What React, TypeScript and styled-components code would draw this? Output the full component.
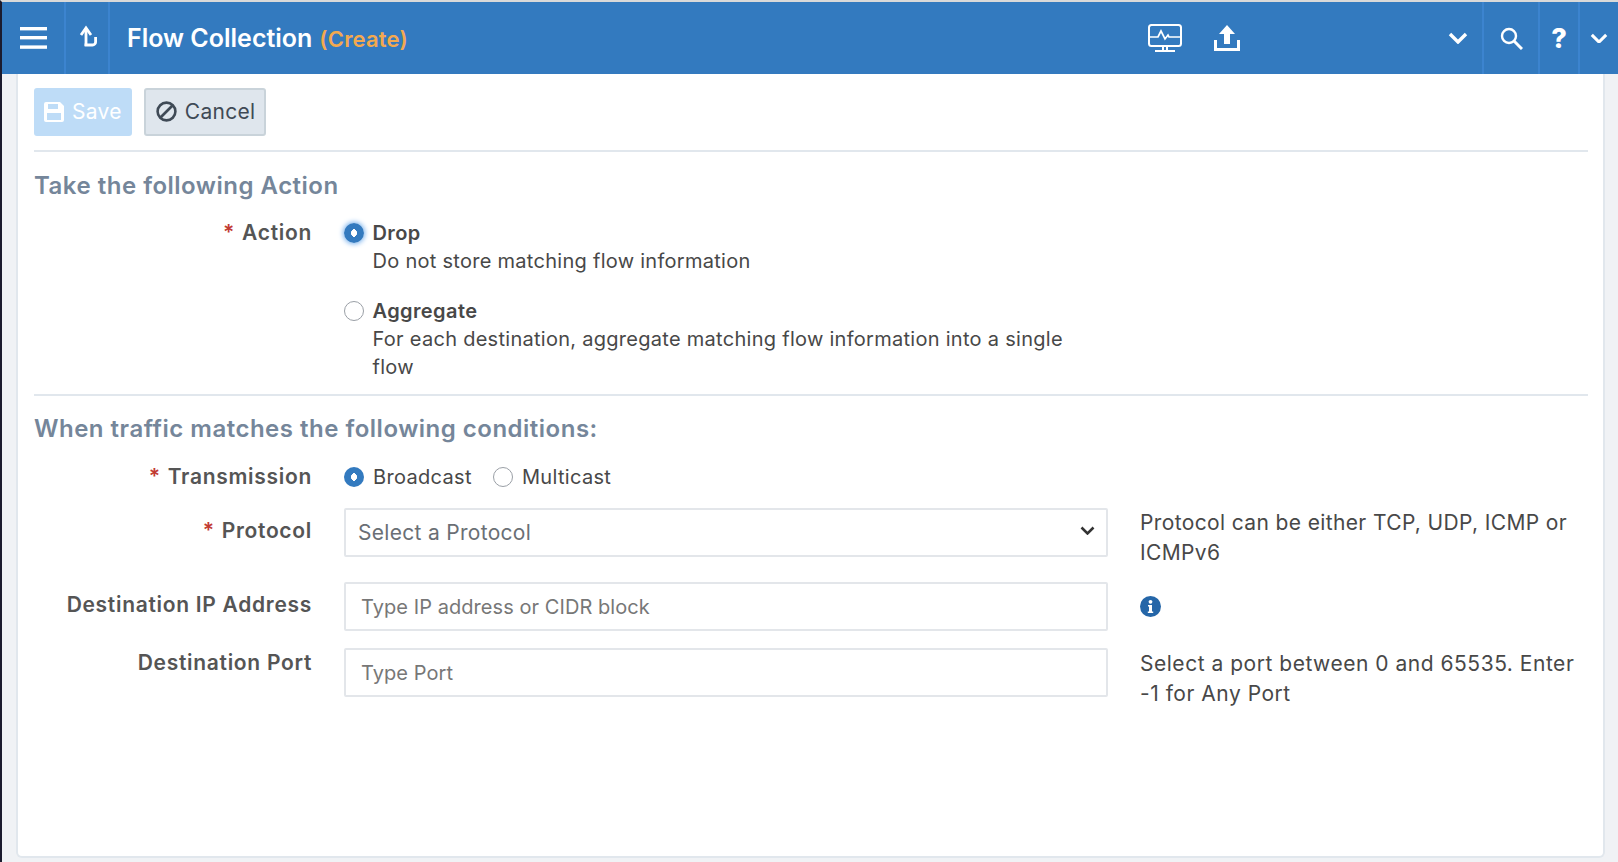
import React from "react";
import styled, { createGlobalStyle } from "styled-components";

const GlobalStyle = createGlobalStyle`
  html, body {
    margin: 0;
    height: 100%;
    background: #f0f2f5;
    overflow: hidden;
  }
  #root {
    height: 100%;
  }
`;

const Page = styled.div`
  display: flex;
  flex-direction: column;
  height: 862px;
  border-left: 2px solid #1b1b2e;
  border-top: 2px solid #d9d9d9;
  box-sizing: border-box;
  font-family: Inter, "Liberation Sans", sans-serif;
  font-size: 20px;
  color: #484848;
`;

const Header = styled.header`
  display: flex;
  align-items: stretch;
  flex: 0 0 72px;
  background: #337abf;
  color: #fff;
`;

const HeaderCell = styled.div<{ $w: number; $divider?: boolean; $nudge?: number }>`
  display: flex;
  align-items: center;
  justify-content: center;
  box-sizing: border-box;
  width: ${props => props.$w}px;
  padding-left: ${props => props.$nudge ?? 0}px;
  border-right: ${props => (props.$divider ? "2px solid #3c84cf" : "none")};
`;

const Title = styled.h1`
  display: flex;
  align-items: baseline;
  margin: 0 0 0 17px;
  align-self: center;
  font-size: 25px;
  font-weight: 600;
`;

const Mode = styled.span`
  margin-left: 7px;
  font-size: 22px;
  font-weight: 600;
  letter-spacing: 0.2px;
  color: #f3a94f;
`;

const HeaderTools = styled.div`
  display: flex;
  align-items: center;
  gap: 32px;
  margin-left: auto;
  margin-right: 190px;
`;

const Help = styled.span`
  font-size: 27px;
  font-weight: 800;
  line-height: 1;
`;

const Main = styled.main`
  flex: 1;
  display: flex;
  padding: 0 13px 4px 14px;
  min-height: 0;
`;

const Card = styled.section`
  flex: 1;
  box-sizing: border-box;
  padding: 14px 15px 0 16px;
  background: #fff;
  border: 2px solid #e1e7ed;
  border-top: none;
  border-radius: 0 0 6px 6px;
`;

const Toolbar = styled.div`
  display: flex;
  gap: 12px;
  padding-bottom: 14px;
  border-bottom: 2px solid #e1e7ed;
`;

const Button = styled.button<{ $disabled?: boolean }>`
  display: flex;
  align-items: center;
  gap: 8px;
  height: 48px;
  padding: 0 ${props => (props.$disabled ? 8 : 9)}px 1px ${props => (props.$disabled ? 8 : 10)}px;
  font: inherit;
  font-size: 21px;
  letter-spacing: 0.3px;
  border-radius: 3px;
  border: 2px solid ${props => (props.$disabled ? "#bedcf7" : "#c9d3da")};
  background: ${props => (props.$disabled ? "#bedcf7" : "#dfe6ed")};
  color: ${props => (props.$disabled ? "#fff" : "#3f4a56")};
`;

const SectionTitle = styled.h2`
  margin: 0;
  font-size: 24px;
  line-height: 28px;
  font-weight: 600;
  letter-spacing: 0.5px;
  color: #75869a;
`;

const ActionSection = styled.div`
  padding: 20px 0 13px;
  border-bottom: 2px solid #e1e7ed;
`;

const ConditionSection = styled.div`
  padding-top: 19px;
`;

const FormRow = styled.div<{ $top: number }>`
  display: grid;
  grid-template-columns: 278px 764px 1fr;
  column-gap: 32px;
  margin-top: ${props => props.$top}px;
  min-height: 28px;
`;

const FieldLabel = styled.label<{ $offset?: number }>`
  padding-top: ${props => props.$offset ?? 0}px;
  text-align: right;
  font-size: 21px;
  font-weight: 600;
  line-height: 28px;
  color: #555;
  letter-spacing: 0.7px;
`;

const Required = styled.span`
  margin-right: 7px;
  color: #c23a33;
`;

const RadioStack = styled.div`
  display: flex;
  flex-direction: column;
  gap: 22px;
  width: 720px;
`;

const RadioRow = styled.label`
  display: grid;
  grid-template-columns: 20px 1fr;
  column-gap: 8.5px;
  line-height: 28px;
`;

const RadioInput = styled.input<{ $focus?: boolean }>`
  appearance: none;
  align-self: center;
  box-sizing: border-box;
  width: 20px;
  height: 20px;
  margin: 0;
  border-radius: 50%;
  border: 1.5px solid #9a9fa6;
  background: #fff;

  &:checked {
    border: none;
    background: radial-gradient(ellipse 3px 4px at center, #fff 90%, #337abf 100%);
    box-shadow: ${props => (props.$focus ? "0 0 5px 1px #79b2ee" : "none")};
  }
`;

const RadioName = styled.span`
  font-weight: 600;
  letter-spacing: 0.4px;
`;

const RadioHint = styled.span`
  grid-column: 2;
  letter-spacing: 0.28px;
`;

const InlineRadios = styled.div`
  display: flex;
  gap: 21px;
`;

const InlineRadio = styled.label`
  display: flex;
  align-items: center;
  gap: 9px;
  line-height: 28px;
  letter-spacing: 0.33px;
`;

const SelectWrap = styled.div`
  position: relative;
`;

const Select = styled.select`
  appearance: none;
  width: 100%;
  box-sizing: border-box;
  height: 49px;
  padding: 0 12px;
  font: inherit;
  font-size: 21px;
  letter-spacing: 0.3px;
  color: #6a6f75;
  background: #fff;
  border: 2px solid #e3e6ea;
  border-radius: 2px;
`;

const SelectArrow = styled.span`
  position: absolute;
  display: flex;
  right: 13px;
  top: 18px;
  pointer-events: none;
`;

const TextInput = styled.input`
  width: 100%;
  box-sizing: border-box;
  height: 49px;
  padding: 0 15px;
  font: inherit;
  letter-spacing: 0.06px;
  background: #fff;
  border: 2px solid #e3e6ea;
  border-radius: 2px;

  &::placeholder {
    color: #777;
    opacity: 1;
  }
`;

const HelpText = styled.p<{ $top?: number; $spacing?: number }>`
  margin: 0;
  padding-top: ${props => props.$top ?? 0}px;
  font-size: 21px;
  line-height: 30px;
  letter-spacing: ${props => props.$spacing ?? 0.37}px;
`;

const InfoWrap = styled.div`
  display: flex;
  align-items: center;
`;

function TreeUp() {
  return (
    <svg width="20" height="26" viewBox="0 0 20 26" fill="none" stroke="#fff" strokeWidth="2.8">
      <path d="M9 21V3.5" />
      <path d="M4 10 9 3l5 7" />
      <path d="M7.6 20h8a3 3 0 0 0 3-3v-5" />
    </svg>
  );
}

function Hamburger() {
  return (
    <svg width="27" height="22" viewBox="0 0 27 22" fill="#fff">
      <rect y="0" width="27" height="3.4" />
      <rect y="9" width="27" height="3.4" />
      <rect y="18.4" width="27" height="3.4" />
    </svg>
  );
}

function Monitor() {
  return (
    <svg width="34" height="28" viewBox="0 0 34 28" fill="none" stroke="#fff" strokeWidth="2">
      <rect x="1" y="1" width="32" height="21" rx="2.5" />
      <path d="M1 13h9l3-6 4 8 3-4 1 2h12" strokeWidth="1.7" />
      <path d="M7 27h20M15 23v3M19 23v3" />
    </svg>
  );
}

function Upload() {
  return (
    <svg width="26" height="26" viewBox="0 0 26 26" fill="#fff">
      <path d="M13 0 21 9h-5v10h-6V9H5z" />
      <path d="M0 15h3v8h20v-8h3v11H0z" />
    </svg>
  );
}

function Chevron({ size, color = "#fff" }: { size: number; color?: string }) {
  return (
    <svg width={size} height={size * 0.6} viewBox="0 0 20 12" fill="none" stroke={color} strokeWidth="3.4">
      <path d="M2 2l8 8 8-8" />
    </svg>
  );
}

function Search() {
  return (
    <svg width="23" height="23" viewBox="0 0 23 23" fill="none" stroke="#fff">
      <circle cx="9" cy="9" r="7" strokeWidth="2.4" />
      <path d="M14 14l8 8" strokeWidth="3" />
    </svg>
  );
}

function Floppy({ color }: { color: string }) {
  return (
    <svg width="20" height="20" viewBox="0 0 20 20">
      <path fill={color} fillRule="evenodd" d="M2 0h14l4 4v14a2 2 0 0 1-2 2H2a2 2 0 0 1-2-2V2a2 2 0 0 1 2-2zm2 2v5h10V2zm-1 9v7h14v-7z" />
    </svg>
  );
}

function Ban() {
  return (
    <svg width="21" height="21" viewBox="0 0 21 21" fill="none" stroke="#3f4a56" strokeWidth="2.6">
      <circle cx="10.5" cy="10.5" r="8.9" />
      <path d="M4.5 16.5l12-12" />
    </svg>
  );
}

function InfoIcon() {
  return (
    <svg width="21" height="21" viewBox="0 0 21 21">
      <circle cx="10.5" cy="10.5" r="10.5" fill="#2566a8" />
      <circle cx="10.5" cy="5.8" r="1.9" fill="#fff" />
      <path d="M8 9h4v6.4h1.2V17H7.8v-1.6H9v-4.8H8z" fill="#fff" />
    </svg>
  );
}

export default function App() {
  return (
    <Page>
      <GlobalStyle />
      <Header>
        <HeaderCell $w={64} $divider><Hamburger /></HeaderCell>
        <HeaderCell $w={44} $divider><TreeUp /></HeaderCell>
        <Title>Flow Collection<Mode>(Create)</Mode></Title>
        <HeaderTools>
          <Monitor />
          <Upload />
        </HeaderTools>
        <HeaderCell $w={54} $divider $nudge={4}><Chevron size={20} /></HeaderCell>
        <HeaderCell $w={56} $divider><Search /></HeaderCell>
        <HeaderCell $w={40} $divider><Help>?</Help></HeaderCell>
        <HeaderCell $w={38}><Chevron size={18} /></HeaderCell>
      </Header>
      <Main>
        <Card>
          <Toolbar>
            <Button $disabled disabled><Floppy color="#fff" />Save</Button>
            <Button><Ban />Cancel</Button>
          </Toolbar>
          <ActionSection>
            <SectionTitle>Take the following Action</SectionTitle>
            <FormRow $top={19}>
              <FieldLabel><Required>*</Required>Action</FieldLabel>
              <RadioStack>
                <RadioRow>
                  <RadioInput type="radio" name="action" defaultChecked $focus />
                  <RadioName>Drop</RadioName>
                  <RadioHint>Do not store matching flow information</RadioHint>
                </RadioRow>
                <RadioRow>
                  <RadioInput type="radio" name="action" />
                  <RadioName>Aggregate</RadioName>
                  <RadioHint>For each destination, aggregate matching flow information into a single flow</RadioHint>
                </RadioRow>
              </RadioStack>
            </FormRow>
          </ActionSection>
          <ConditionSection>
            <SectionTitle>When traffic matches the following conditions:</SectionTitle>
            <FormRow $top={20}>
              <FieldLabel><Required>*</Required>Transmission</FieldLabel>
              <InlineRadios>
                <InlineRadio><RadioInput type="radio" name="tx" defaultChecked />Broadcast</InlineRadio>
                <InlineRadio><RadioInput type="radio" name="tx" />Multicast</InlineRadio>
              </InlineRadios>
            </FormRow>
            <FormRow $top={17}>
              <FieldLabel $offset={9}><Required>*</Required>Protocol</FieldLabel>
              <SelectWrap>
                <Select defaultValue="">
                  <option value="">Select a Protocol</option>
                </Select>
                <SelectArrow><Chevron size={15} color="#333" /></SelectArrow>
              </SelectWrap>
              <HelpText>Protocol can be either TCP, UDP, ICMP or ICMPv6</HelpText>
            </FormRow>
            <FormRow $top={14}>
              <FieldLabel $offset={9}>Destination IP Address</FieldLabel>
              <TextInput placeholder="Type IP address or CIDR block" />
              <InfoWrap><InfoIcon /></InfoWrap>
            </FormRow>
            <FormRow $top={17}>
              <FieldLabel $offset={1}>Destination Port</FieldLabel>
              <TextInput placeholder="Type Port" />
              <HelpText $top={1} $spacing={0.52}>Select a port between 0 and 65535. Enter -1 for Any Port</HelpText>
            </FormRow>
          </ConditionSection>
        </Card>
      </Main>
    </Page>
  );
}
